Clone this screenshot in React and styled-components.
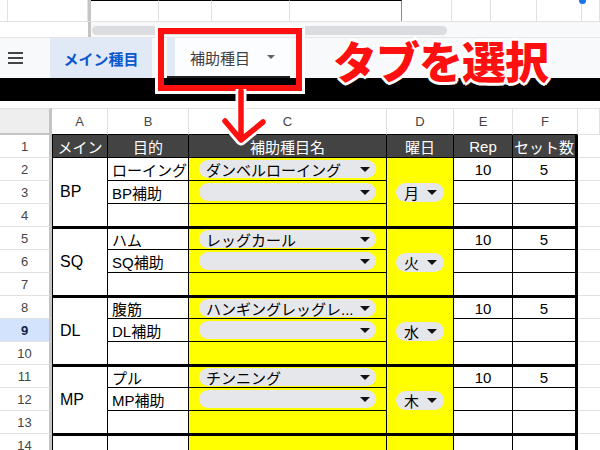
import React from 'react'
import styled, { createGlobalStyle } from 'styled-components'

const GlobalStyle = createGlobalStyle`
  html, body {
    margin: 0;
    padding: 0;
    background: #fff;
  }
  body {
    width: 600px;
    height: 450px;
    overflow: hidden;
    font-family: 'Liberation Sans', 'Noto Sans CJK JP', sans-serif;
  }
`

const topCells = [
  { w: 8 },
  { w: 80 },
  { w: 3, divider: true },
  { w: 68, top: true },
  { w: 53, top: true },
  { w: 78, top: true },
  { w: 112, top: true, dark: true },
  { w: 50 },
  { w: 39 },
  { w: 46 },
  { w: 45 },
  { w: 18 },
]

const groups = [
  {
    main: 'BP',
    purpose: ['ローイング', 'BP補助'],
    item: 'ダンベルローイング',
    day: '月',
  },
  { main: 'SQ', purpose: ['ハム', 'SQ補助'], item: 'レッグカール', day: '火' },
  {
    main: 'DL',
    purpose: ['腹筋', 'DL補助'],
    item: 'ハンギングレッグレ...',
    day: '水',
  },
  { main: 'MP', purpose: ['プル', 'MP補助'], item: 'チンニング', day: '木' },
]

const headers = ['メイン', '目的', '補助種目名', '曜日', 'Rep', 'セット数']
const letters = ['A', 'B', 'C', 'D', 'E', 'F']

function Caret({ size = 10 }) {
  return (
    <svg width={size} height={size / 2} viewBox="0 0 10 5">
      <path d="M0 0 L10 0 L5 5 Z" fill="#111" />
    </svg>
  )
}

function App() {
  const rows = []
  groups.forEach((g, gi) => {
    const first = gi * 3 + 2
    const sep = gi > 0
    // first row of the group
    rows.push(
      <RowNum key={`n${first}`}>{first}</RowNum>,
      <Cell key={`a${first}`} $span={3} $sep={sep} $left $pad="7px" $size="16px">
        {g.main}
      </Cell>,
      <Cell key={`b${first}`} $sep={sep} $pad="4px">
        {g.purpose[0]}
      </Cell>,
      <Cell key={`c${first}`} $sep={sep} $yellow>
        <Chip>
          <ChipText>{g.item}</ChipText>
          <Caret />
        </Chip>
      </Cell>,
      <Cell key={`d${first}`} $span={3} $sep={sep} $yellow $center>
        <DayChip>
          {g.day}
          <Caret />
        </DayChip>
      </Cell>,
      <Cell key={`e${first}`} $sep={sep} $center>
        10
      </Cell>,
      <Cell key={`f${first}`} $sep={sep} $center $edge>
        5
      </Cell>,
      <Blank key={`x${first}`} />,
    )
    // second row
    const second = first + 1
    rows.push(
      <RowNum key={`n${second}`} $active={second === 9}>
        {second}
      </RowNum>,
      <Cell key={`b${second}`} $pad="4px">
        {g.purpose[1]}
      </Cell>,
      <Cell key={`c${second}`} $yellow>
        <Chip>
          <ChipText />
          <Caret />
        </Chip>
      </Cell>,
      <Cell key={`e${second}`} />,
      <Cell key={`f${second}`} $edge />,
      <Blank key={`x${second}`} />,
    )
    // third row
    const third = first + 2
    rows.push(
      <RowNum key={`n${third}`}>{third}</RowNum>,
      <Cell key={`b${third}`} />,
      <Cell key={`c${third}`} $yellow />,
      <Cell key={`e${third}`} />,
      <Cell key={`f${third}`} $edge />,
      <Blank key={`x${third}`} />,
    )
  })

  return (
    <Page>
      <GlobalStyle />
      <TopStrip>
        {topCells.map((c, i) => (
          <TopCell
            key={i}
            $w={c.w}
            $divider={c.divider}
            $top={c.top}
            $dark={c.dark}
          />
        ))}
      </TopStrip>
      <ScrollRow>
        <ScrollSpacer />
        <ScrollDivider />
        <Thumb />
      </ScrollRow>
      <TabBar>
        <MenuButton>
          <svg width="15" height="12" viewBox="0 0 15 12">
            <rect x="0" y="0" width="15" height="2" fill="#444" />
            <rect x="0" y="5" width="15" height="2" fill="#444" />
            <rect x="0" y="10" width="15" height="2" fill="#444" />
          </svg>
        </MenuButton>
        <Tab $active>メイン種目</Tab>
        <TabGap />
        <TabEdge />
        <Tab $underline>
          補助種目
          <Caret size={8} />
        </Tab>
      </TabBar>
      <BlackBand />
      <Gap />
      <Sheet>
        <Corner />
        {letters.map((l) => (
          <ColLetter key={l}>{l}</ColLetter>
        ))}
        <ColLetter $extra />

        <RowNum>1</RowNum>
        {headers.map((h, i) => (
          <HeadCell key={h} $left={i === 0} $edge={i === 5}>
            {h}
          </HeadCell>
        ))}
        <Blank />

        {rows}

        <RowNum>14</RowNum>
        <Cell $sep $left />
        <Cell $sep />
        <Cell $sep $yellow />
        <Cell $sep $yellow />
        <Cell $sep />
        <Cell $sep $edge />
        <Blank />
      </Sheet>

      <Handle />
      <Callout>タブを選択</Callout>
      <RedFrame />
      <Arrow width="60" height="62" viewBox="0 0 60 62">
        <g fill="none" strokeLinecap="round" strokeLinejoin="round">
          <path
            d="M21 2 L21 50 M5 32 L21 51 L43 33"
            stroke="#fff"
            strokeWidth="11"
          />
          <path
            d="M21 2 L21 50 M5 32 L21 51 L43 33"
            stroke="#ff1010"
            strokeWidth="5.5"
          />
        </g>
      </Arrow>
    </Page>
  )
}

const Page = styled.div`
  position: relative;
  width: 600px;
  height: 450px;
  overflow: hidden;
  background: #fff;
`

// top strip of the upper sheet
const TopStrip = styled.div`
  display: flex;
  height: 22px;
  border-bottom: 1px solid #e1e1e1;
  box-sizing: border-box;
`
const TopCell = styled.div`
  flex: none;
  width: ${(p) => p.$w}px;
  box-sizing: border-box;
  background: ${(p) => (p.$divider ? '#c4c4c4' : '#fff')};
  border-right: ${(p) =>
    p.$divider ? 'none' : `1px solid ${p.$dark ? '#8a8a8a' : '#e1e1e1'}`};
  border-top: ${(p) => (p.$top ? '1.5px solid #000' : 'none')};
`

const ScrollRow = styled.div`
  display: flex;
  height: 15px;
  background: #f8f9fa;
`
const ScrollSpacer = styled.div`
  width: 88px;
  background: #fff;
`
const ScrollDivider = styled.div`
  width: 3px;
  background: #c4c4c4;
`
const Thumb = styled.div`
  width: 355px;
  height: 9px;
  margin: 4px 0 0 1px;
  border-radius: 5px;
  background: #dadce0;
`

const TabBar = styled.div`
  display: flex;
  height: 41px;
  background: #f8f9fa;
  border-top: 1px solid #e6e6e6;
  box-sizing: border-box;
`
const MenuButton = styled.div`
  width: 50px;
  display: flex;
  align-items: center;
  padding-left: 8px;
  box-sizing: border-box;
`
const Tab = styled.div`
  display: flex;
  align-items: center;
  justify-content: ${(p) => (p.$active ? 'center' : 'flex-start')};
  gap: 17px;
  width: ${(p) => (p.$active ? '102px' : '115px')};
  padding-left: ${(p) => (p.$active ? '0' : '15px')};
  box-sizing: border-box;
  background: ${(p) => (p.$active ? '#e1e9f7' : '#fcfdfe')};
  color: ${(p) => (p.$active ? '#0b57d0' : '#3c4043')};
  font-family: 'Noto Sans CJK JP', sans-serif;
  font-size: 15px;
  font-weight: ${(p) => (p.$active ? 700 : 400)};
  border-bottom: ${(p) => (p.$underline ? '2px solid #202124' : 'none')};

  svg path {
    fill: #5f6368;
  }
`
const TabGap = styled.div`
  width: 15px;
`
const TabEdge = styled.div`
  width: 8px;
  background: #e1e9f7;
  border-bottom: 2px solid #202124;
  box-sizing: border-box;
`

const BlackBand = styled.div`
  height: 23px;
  background: #000;
`
const Gap = styled.div`
  height: 7px;
  background: #fff;
`

// lower sheet
const Sheet = styled.div`
  display: grid;
  grid-template-columns: 52px 56px 81px 198px 67px 59px 65px 1fr;
  grid-template-rows: 27px repeat(14, 23px);
  font-size: 15px;
  color: #000;
`
const Corner = styled.div`
  background: #eeeeee;
  border-right: 3px solid #c4c4c4;
  border-bottom: 2px solid #c4c4c4;
  border-top: 1px solid #e1e1e1;
`
const ColLetter = styled.div`
  display: flex;
  align-items: center;
  justify-content: center;
  background: #fff;
  color: #444;
  font-size: 13px;
  border-top: 1px solid #e1e1e1;
  border-right: 1px solid #e1e1e1;
  border-bottom: 1px solid ${(p) => (p.$extra ? '#e1e1e1' : '#000')};
`
const RowNum = styled.div`
  display: flex;
  align-items: center;
  justify-content: center;
  background: ${(p) => (p.$active ? '#d3e3fd' : '#fff')};
  color: ${(p) => (p.$active ? '#0b1f4a' : '#444')};
  font-size: 13px;
  font-weight: ${(p) => (p.$active ? 700 : 400)};
  border-right: 3px solid #c4c4c4;
  border-bottom: 1px solid #e1e1e1;
`
const HeadCell = styled.div`
  display: flex;
  align-items: center;
  justify-content: center;
  background: #434343;
  color: #fff;
  font-size: 15px;
  white-space: nowrap;
  overflow: hidden;
  border-left: ${(p) => (p.$left ? '1px solid #000' : 'none')};
  border-right: ${(p) => (p.$edge ? '3px' : '1px')} solid #000;
  border-bottom: 1px solid #000;
`
const Cell = styled.div`
  grid-row: span ${(p) => p.$span || 1};
  display: flex;
  align-items: center;
  justify-content: ${(p) => (p.$center ? 'center' : 'flex-start')};
  padding-left: ${(p) => p.$pad || '0'};
  box-sizing: border-box;
  min-width: 0;
  background: ${(p) => (p.$yellow ? '#ffff00' : '#fff')};
  font-size: ${(p) => p.$size || '15px'};
  white-space: nowrap;
  border-left: ${(p) => (p.$left ? '1px solid #000' : 'none')};
  border-top: ${(p) => (p.$sep ? '2px solid #000' : 'none')};
  border-right: ${(p) => (p.$edge ? '3px' : '1px')} solid #000;
  border-bottom: 1px solid #000;
`
const Blank = styled.div`
  background: #fff;
  border-bottom: 1px solid #e1e1e1;
`
const Chip = styled.div`
  flex: 1;
  min-width: 0;
  display: flex;
  align-items: center;
  justify-content: space-between;
  height: 18px;
  margin: 0 10px 0 10px;
  padding: 0 6px 0 7px;
  border-radius: 9px;
  background: #e6e7eb;
`
const ChipText = styled.span`
  overflow: hidden;
  white-space: nowrap;
`
const DayChip = styled.div`
  display: flex;
  align-items: center;
  gap: 8px;
  height: 19px;
  padding: 0 7px 0 8px;
  border-radius: 10px;
  background: #e6e7eb;
`

// annotation overlays
const Handle = styled.div`
  position: absolute;
  left: 579px;
  top: -3px;
  width: 7px;
  height: 7px;
  border-radius: 50%;
  background: #1a73e8;
`
const Callout = styled.div`
  position: absolute;
  left: 333px;
  top: 34px;
  font-family: 'Noto Sans CJK JP', sans-serif;
  font-size: 44px;
  line-height: 52px;
  font-weight: 900;
  letter-spacing: -1px;
  color: #ff1010;
  text-shadow:
    3px 0 0 #fff, -3px 0 0 #fff, 0 3px 0 #fff, 0 -3px 0 #fff,
    2px 2px 0 #fff, -2px 2px 0 #fff, 2px -2px 0 #fff, -2px -2px 0 #fff;
`
const RedFrame = styled.div`
  position: absolute;
  left: 158px;
  top: 28px;
  width: 144px;
  height: 63px;
  box-sizing: border-box;
  border: 6px solid #ff1010;
  box-shadow: 0 0 0 3px #fff;
`
const Arrow = styled.svg`
  position: absolute;
  left: 220px;
  top: 89px;
`

export default App
